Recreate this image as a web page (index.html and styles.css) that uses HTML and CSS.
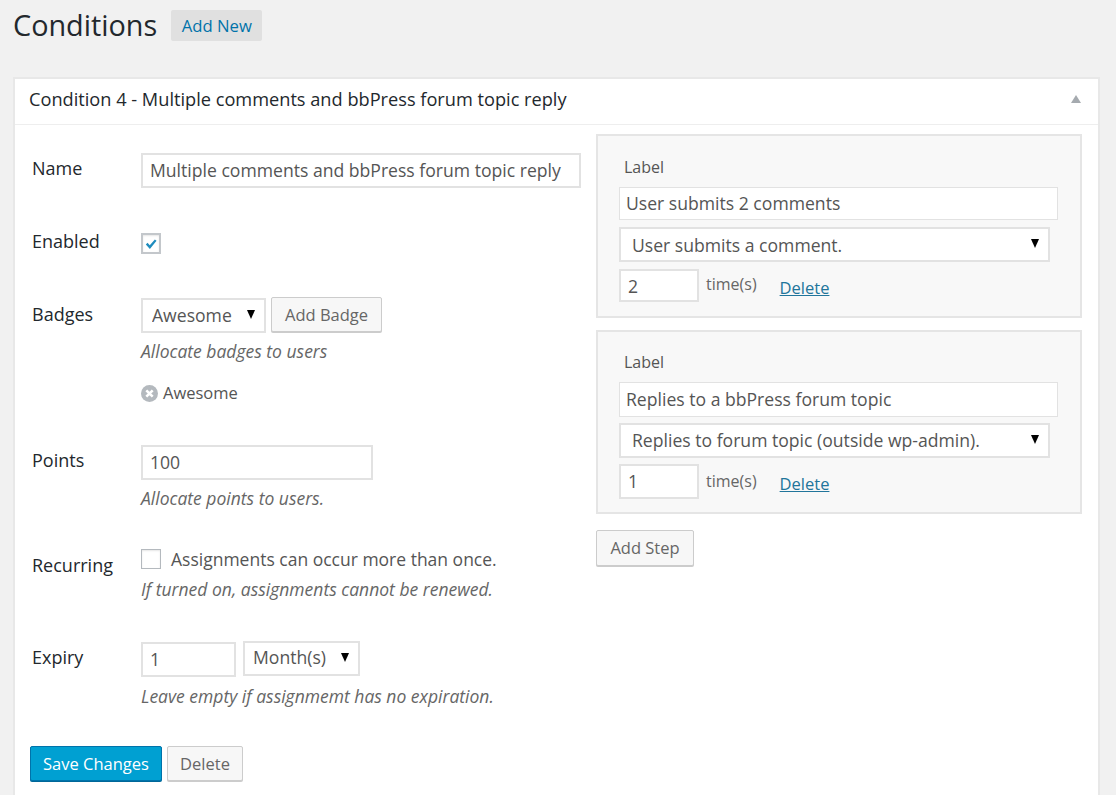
FILE: index.html
```html
<!doctype html>
<html>
<head>
<meta charset="UTF-8">
<title>Conditions</title>
<link rel="stylesheet" href="styles.css">
</head>

<body>

<div class="wrap">
   <div class="page-head">
      <h1>Conditions</h1>
      <a class="add-new">Add New</a>
   </div>

   <div class="card">
      <div class="card-head">
         <h2>Condition 4 - Multiple comments and bbPress forum topic reply</h2>
         <span class="toggle"></span>
      </div>

      <div class="card-body">
         <form class="fields" onsubmit="return false;">
            <div class="row row-name">
               <label>Name</label>
               <div class="control">
                  <input class="input input-name" value="Multiple comments and bbPress forum topic reply">
               </div>
            </div>

            <div class="row row-enabled">
               <label>Enabled</label>
               <div class="control">
                  <span class="check check-on">
                     <svg width="18" height="18" viewBox="0 0 17 17"><path d="M3 9l1.8-1.8 2.4 2.5L12.6 3.6l1.8 1.5-7.1 8.6z" fill="#1e8cbe"/></svg>
                  </span>
               </div>
            </div>

            <div class="row row-badges">
               <label>Badges</label>
               <div class="control">
                  <div class="inline">
                     <div class="select select-badge"><select><option>Awesome</option></select></div>
                     <button class="btn btn-badge">Add Badge</button>
                  </div>
                  <p class="help">Allocate badges to users</p>
                  <div class="badge-item">
                     <svg width="17" height="17" viewBox="0 0 16 16"><circle cx="8" cy="8" r="8" fill="#b4b9be"/><path d="M5 5l6 6M11 5l-6 6" stroke="#fff" stroke-width="2.4"/></svg>
                     <span>Awesome</span>
                  </div>
               </div>
            </div>

            <div class="row row-points">
               <label>Points</label>
               <div class="control">
                  <input class="input input-points" value="100">
                  <p class="help">Allocate points to users.</p>
               </div>
            </div>

            <div class="row row-recurring">
               <label>Recurring</label>
               <div class="control">
                  <div class="check-line">
                     <span class="check"></span>
                     <span>Assignments can occur more than once.</span>
                  </div>
                  <p class="help">If turned on, assignments cannot be renewed.</p>
               </div>
            </div>

            <div class="row row-expiry">
               <label>Expiry</label>
               <div class="control">
                  <div class="inline inline-expiry">
                     <input class="input input-expiry" value="1">
                     <div class="select select-expiry"><select><option>Month(s)</option></select></div>
                  </div>
                  <p class="help">Leave empty if assignmemt has no expiration.</p>
               </div>
            </div>

            <div class="actions">
               <button class="btn btn-primary">Save Changes</button>
               <button class="btn btn-delete">Delete</button>
            </div>
         </form>

         <div class="steps">
            <div class="step">
               <p class="step-label">Label</p>
               <input class="input input-step" value="User submits 2 comments">
               <div class="select select-step"><select><option>User submits a comment.</option></select></div>
               <div class="times">
                  <input class="input input-times" value="2">
                  <span class="times-text">time(s)</span>
                  <a class="delete-link">Delete</a>
               </div>
            </div>

            <div class="step">
               <p class="step-label">Label</p>
               <input class="input input-step" value="Replies to a bbPress forum topic">
               <div class="select select-step"><select><option>Replies to forum topic (outside wp-admin).</option></select></div>
               <div class="times">
                  <input class="input input-times" value="1">
                  <span class="times-text">time(s)</span>
                  <a class="delete-link">Delete</a>
               </div>
            </div>

            <button class="btn btn-step">Add Step</button>
         </div>
      </div>
   </div>
</div>

</body>
</html>
```

FILE: styles.css
```css
body, div, h1, h2, p, a, form, label {
   margin: 0;
   padding: 0;
   border: 0;
}

html, body {
   height: 795px;
   overflow: hidden;
}

body {
   background: #f1f1f1;
   color: #444;
   font-family: "Open Sans", sans-serif;
   font-size: 17px;
}

.wrap {
   padding: 10px 16px 0 13px;
}

.page-head {
   display: flex;
   align-items: flex-start;
   height: 67px;
}

h1 {
   color: #23282d;
   font-size: 28.8px;
   font-weight: 400;
   line-height: 30px;
}

.add-new {
   margin-left: 14px;
   width: 91px;
   height: 31px;
   background: #e0e0e0;
   border-radius: 2px;
   color: #0073aa;
   font-size: 16.7px;
   font-weight: 500;
   line-height: 32px;
   text-align: center;
}

.card {
   background: #fff;
   border: 2px solid #e8e8e8;
   border-bottom: 0;
   height: 720px;
}

.card-head {
   display: flex;
   align-items: center;
   justify-content: space-between;
   height: 39px;
   padding: 0 17px 6px 14px;
   border-bottom: 1px solid #eee;
}

h2 {
   color: #23282d;
   font-size: 18.2px;
   font-weight: 500;
   line-height: 24px;
}

.toggle {
   width: 0;
   height: 0;
   border-left: 5.5px solid transparent;
   border-right: 5.5px solid transparent;
   border-bottom: 8px solid #a5aaaf;
}

.card-body {
   display: flex;
   align-items: flex-start;
}

.fields {
   width: 581px;
   flex: none;
   padding-top: 28px;
}

.row {
   display: flex;
}

.row label {
   width: 109px;
   flex: none;
   margin-left: 17px;
   color: #23282d;
   font-size: 18px;
   font-weight: 500;
   line-height: 24px;
}

.control {
   flex: 1;
}

.row-name { height: 80px; }
.row-enabled { height: 65px; }
.row-badges { height: 147px; }
.row-points { height: 105px; }
.row-recurring { height: 92px; }
.row-expiry { height: 104px; }

.row-name label { margin-top: 3px; }
.row-enabled label { margin-top: -4px; }
.row-badges label { margin-top: 4px; }
.row-points label { margin-top: 3px; }
.row-recurring label { margin-top: 3px; }
.row-expiry label { margin-top: 3px; }

.input {
   display: block;
   box-sizing: border-box;
   height: 35px;
   padding: 0 7px 2px;
   background: #fff;
   border: 2px solid #e2e2e2;
   color: #555;
   font-family: "Open Sans", sans-serif;
   font-size: 17.6px;
   outline: 0;
}

.input-name { width: 440px; }
.input-points { width: 232px; }
.input-expiry { width: 95px; }

.select {
   position: relative;
   box-sizing: border-box;
   height: 35px;
   background: #fff;
   border: 2px solid #e2e2e2;
}

.select::after {
   content: "";
   position: absolute;
   top: 10px;
   right: 9px;
   border-left: 4.5px solid transparent;
   border-right: 4.5px solid transparent;
   border-top: 9px solid #000;
   pointer-events: none;
}

.select select {
   display: block;
   width: 100%;
   height: 100%;
   padding: 0 8px 2px;
   appearance: none;
   background: transparent;
   border: 0;
   color: #555;
   font-family: "Open Sans", sans-serif;
   font-size: 17.6px;
   outline: 0;
}

.select-badge { width: 125px; }
.select-expiry { width: 117px; margin-top: -1px; }

.select-badge select { padding-left: 9px; }
.select-expiry select { padding-bottom: 4px; }

.inline {
   display: flex;
   gap: 5px;
}

.inline-expiry {
   gap: 7px;
}

.btn {
   box-sizing: border-box;
   height: 35px;
   padding: 0;
   background: #f7f7f7;
   border: 1px solid #ccc;
   border-radius: 2px;
   box-shadow: 0 1px 0 #ccc;
   color: #666;
   font-family: "Open Sans", sans-serif;
   font-size: 16.5px;
}

.btn-badge {
   width: 111px;
   margin-top: -1px;
}

.help {
   margin-top: 6px;
   color: #666;
   font-size: 17.5px;
   font-style: italic;
   line-height: 24px;
}

.row-recurring .help {
   margin-top: 8px;
}

.row-expiry .help {
   margin-top: 7px;
}

.badge-item {
   display: flex;
   align-items: center;
   gap: 5px;
   margin-top: 18px;
   color: #555;
   font-size: 16.5px;
   line-height: 24px;
}

.check {
   display: flex;
   align-items: center;
   justify-content: center;
   flex: none;
   box-sizing: border-box;
   width: 20px;
   height: 20px;
   background: #fff;
   border: 1px solid #b4b9be;
   box-shadow: inset 0 1px 2px rgba(0, 0, 0, 0.1);
}

.check-on {
   height: 21px;
   border: 2px solid #c3c7cb;
}

.check-line {
   display: flex;
   align-items: center;
   gap: 10px;
   height: 20px;
   color: #555;
   font-size: 17.5px;
}

.row-recurring .control {
   margin-top: -1px;
}

.actions {
   display: flex;
   gap: 5px;
   margin-left: 15px;
}

.btn-primary {
   width: 132px;
   background: #00a0d2;
   border-color: #0073aa;
   box-shadow: 0 1px 0 #006799;
   color: #fff;
   font-weight: 500;
}

.btn-delete {
   width: 76px;
}

.steps {
   flex: 1;
   padding: 9px 17px 0 0;
   display: flex;
   flex-direction: column;
   align-items: flex-start;
}

.step {
   box-sizing: border-box;
   width: 100%;
   margin-bottom: 12px;
   padding: 19px 22px 14px 21px;
   background: #f8f8f8;
   border: 2px solid #e5e5e5;
}

.step + .step {
   margin-bottom: 16px;
   padding-top: 18px;
   padding-bottom: 13px;
}

.step-label {
   margin-left: 5px;
   color: #555;
   font-size: 16px;
   line-height: 24px;
}

.input-step {
   width: 439px;
   height: 33px;
   margin-top: 8px;
   padding-left: 6px;
   border-width: 1px;
}

.step + .step .input-step {
   height: 35px;
}

.select-step {
   width: 431px;
   margin-top: 7px;
}

.step + .step .select-step {
   margin-top: 6px;
}

.select-step select {
   padding: 0 11px;
}

.step + .step .select-step select {
   padding-bottom: 2px;
}

.times {
   display: flex;
   align-items: flex-start;
   margin-top: 7px;
}

.step + .step .times {
   margin-top: 6px;
}

.input-times {
   width: 80px;
   height: 33px;
   padding-bottom: 0;
}

.step + .step .input-times {
   height: 35px;
   padding-bottom: 2px;
}

.times-text {
   margin-left: 7px;
   padding-top: 1px;
   color: #666;
   font-size: 16px;
   line-height: 28px;
}

.step + .step .times-text {
   padding-top: 3px;
}

.delete-link {
   margin-left: 23px;
   margin-top: 5px;
   color: #21759b;
   font-size: 16.5px;
   line-height: 28px;
   text-decoration: underline;
}

.step + .step .delete-link {
   margin-top: 6px;
}

.btn-step {
   width: 98px;
   height: 36px;
   padding-bottom: 2px;
}
```
